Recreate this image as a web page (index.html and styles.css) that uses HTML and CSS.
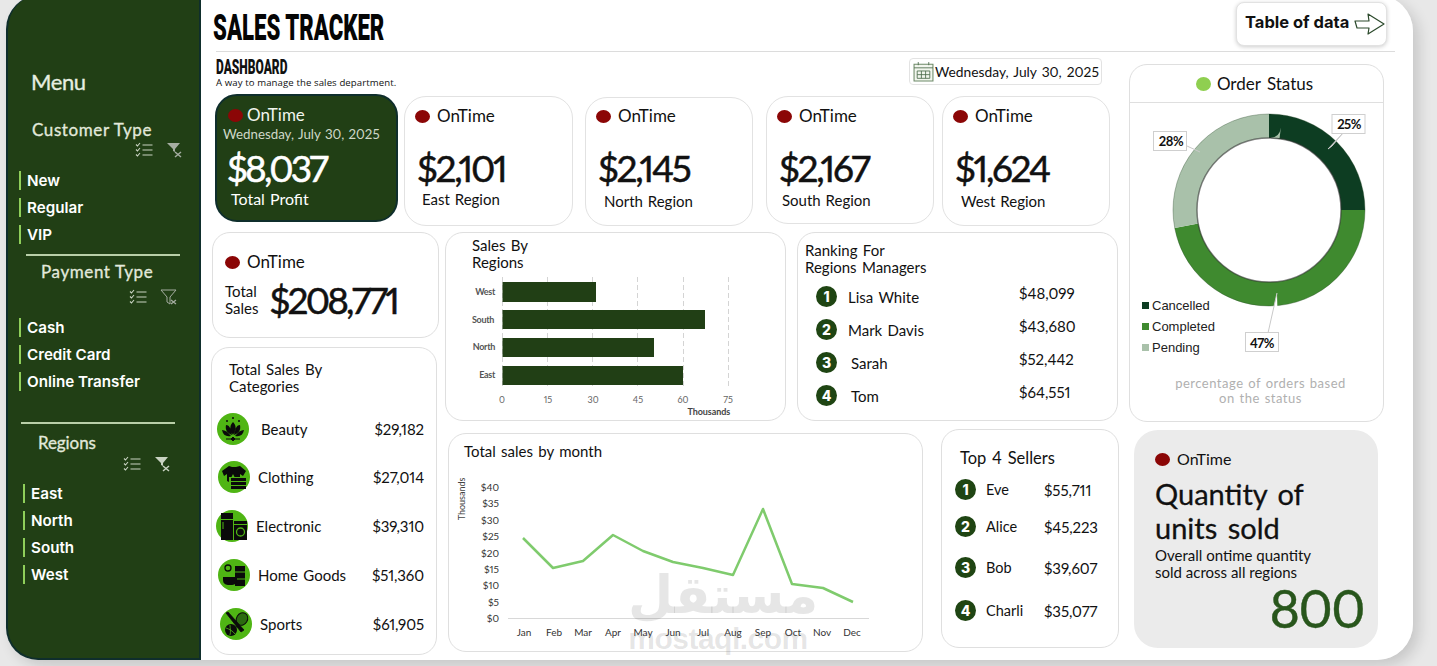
FILE: index.html
```html
<!DOCTYPE html>
<html lang="en">
<head>
<meta charset="utf-8">
<title>Sales Tracker</title>
<link rel="stylesheet" href="styles.css">
</head>
<body>
<svg class="defs" width="0" height="0" aria-hidden="true">
  <defs>
    <symbol id="checks" viewBox="0 0 18 16">
      <path d="M1 2.5l1.5 1.5L5 1M1 7.5L2.5 9 5 6M1 12.5L2.5 14 5 11M7.5 3h10M7.5 8h10M7.5 13h10" fill="none" stroke="currentColor" stroke-width="1.1"/>
    </symbol>
    <symbol id="funnel" viewBox="0 0 18 16">
      <path d="M1 1h13L9 7v3L7 9V7z" fill="currentColor"/>
      <path d="M9 10l6 5M15 10l-6 5" fill="none" stroke="currentColor" stroke-width="1.5"/>
    </symbol>
    <symbol id="funnel-open" viewBox="0 0 18 16">
      <path d="M1 1h15l-6 7v7l-3-2V8z" fill="none" stroke="currentColor" stroke-width="1"/>
      <path d="M11 11l5 4M16 11l-5 4" fill="none" stroke="currentColor" stroke-width="1.3"/>
    </symbol>
  </defs>
</svg>

<div class="shell">
  <aside class="sidebar">
    <h2 class="menu-title">Menu</h2>

    <section class="slicer slicer-customer">
      <h3 class="slicer-title">Customer Type</h3>
      <div class="slicer-tools">
        <svg class="tool"><use href="#checks"/></svg>
        <svg class="tool tool-dim"><use href="#funnel"/></svg>
      </div>
      <ul class="slicer-list">
        <li>New</li><li>Regular</li><li>VIP</li>
      </ul>
    </section>

    <section class="slicer slicer-payment">
      <h3 class="slicer-title">Payment Type</h3>
      <div class="slicer-tools">
        <svg class="tool"><use href="#checks"/></svg>
        <svg class="tool tool-dim"><use href="#funnel-open"/></svg>
      </div>
      <ul class="slicer-list">
        <li>Cash</li><li>Credit Card</li><li>Online Transfer</li>
      </ul>
    </section>

    <section class="slicer slicer-regions">
      <h3 class="slicer-title">Regions</h3>
      <div class="slicer-tools">
        <svg class="tool"><use href="#checks"/></svg>
        <svg class="tool"><use href="#funnel"/></svg>
      </div>
      <ul class="slicer-list">
        <li>East</li><li>North</li><li>South</li><li>West</li>
      </ul>
    </section>
  </aside>

  <main class="main">
    <header class="topbar">
      <h1 class="brand">SALES TRACKER</h1>
      <button class="table-btn"><span class="table-text">Table of data</span>
        <svg class="table-arrow" viewBox="0 0 32 24"><path d="M1 9h14l-1-7 16 10-16 10 1-6H3z" fill="#fff" stroke="#2c4a2c" stroke-width="1.2" stroke-linejoin="round"/></svg>
      </button>
    </header>

    <div class="content">
      <div class="left">
        <div class="subhead">
          <div>
            <div class="dash-title">DASHBOARD</div>
            <div class="dash-sub">A way to manage the sales department.</div>
          </div>
          <div class="date-chip">
            <svg class="cal" viewBox="0 0 20 20"><path d="M1 3h18v16H1z" fill="#f2f6ee" stroke="#6d8a68"/><path d="M1 6.500h18M4 9.500h12v7H4zM4 13h12M8 9.500v7M12 9.500v7M5 1v3M15 1v3" fill="none" stroke="#4a6a4a" stroke-width=".8"/></svg>
            <span>Wednesday, July 30, 2025</span>
          </div>
        </div>

        <div class="kpis">
          <article class="kpi kpi-main">
            <div class="status"><i class="dot"></i>OnTime</div>
            <div class="kpi-date">Wednesday, July 30, 2025</div>
            <div class="kpi-value">$8,037</div>
            <div class="kpi-label">Total Profit</div>
          </article>
          <article class="kpi kpi-east">
            <div class="status"><i class="dot"></i>OnTime</div>
            <div class="kpi-value">$2,101</div>
            <div class="kpi-label">East Region</div>
          </article>
          <article class="kpi kpi-north">
            <div class="status"><i class="dot"></i>OnTime</div>
            <div class="kpi-value">$2,145</div>
            <div class="kpi-label">North Region</div>
          </article>
          <article class="kpi kpi-south">
            <div class="status"><i class="dot"></i>OnTime</div>
            <div class="kpi-value">$2,167</div>
            <div class="kpi-label">South Region</div>
          </article>
          <article class="kpi kpi-west">
            <div class="status"><i class="dot"></i>OnTime</div>
            <div class="kpi-value">$1,624</div>
            <div class="kpi-label">West Region</div>
          </article>
        </div>

        <div class="lower">
          <div class="col-a">
            <article class="card total-card">
              <div class="status"><i class="dot"></i>OnTime</div>
              <div class="total-row">
                <div class="total-label">Total<br>Sales</div>
                <div class="total-value">$208,771</div>
              </div>
            </article>
            <article class="card cat-card">
              <h4 class="card-title">Total Sales By<br>Categories</h4>
              <ul class="cat-list">
                <li class="cat-row cat-beauty">
                  <svg class="cat-icon" viewBox="0 0 32 32"><circle cx="16" cy="16" r="16" fill="#4fb514"/><path d="M16 9c3 3 4 7 0 13-4-6-3-10 0-13zM9 12c3 0 5 3 6 10-5-2-7-5-6-10zM23 12c-3 0-5 3-6 10 5-2 7-5 6-10zM5 17c3 0 6 2 9 6-5 1-8-1-9-6zM27 17c-3 0-6 2-9 6 5 1 8-1 9-6z" fill="#0a0a0a"/><path d="M9 26h14M16 24l2 2-2 2-2-2z" stroke="#0a0a0a" fill="#0a0a0a"/><circle cx="16" cy="5" r="1" fill="#0a0a0a"/><circle cx="10" cy="8" r="1" fill="#0a0a0a"/><circle cx="22" cy="8" r="1" fill="#0a0a0a"/></svg>
                  <span class="cat-name">Beauty</span><span class="cat-amt">$29,182</span>
                </li>
                <li class="cat-row cat-clothing">
                  <svg class="cat-icon" viewBox="0 0 32 32"><circle cx="16" cy="16" r="16" fill="#4fb514"/><path d="M11 5l3 1h4l4-1 6 5-3 5-3-2v3H11v5l-2-1v-7l-3 2-2-5z" fill="#0a0a0a"/><path d="M13 17l2-4 2 4z" fill="#4fb514"/><path d="M13 17h15v3H13zM13 21h15v3H13zM13 25h15v3H13z" fill="#0a0a0a"/></svg>
                  <span class="cat-name">Clothing</span><span class="cat-amt">$27,014</span>
                </li>
                <li class="cat-row cat-electronic">
                  <svg class="cat-icon" viewBox="0 0 32 32"><circle cx="16" cy="16" r="16" fill="#4fb514"/><path d="M5 3h12v27H5zM18 11h13v19H18z" fill="#0a0a0a"/><path d="M5 9.500h12M7 12v7M18 14.500h13" stroke="#4fb514"/><circle cx="24.500" cy="22" r="4" fill="none" stroke="#4fb514" stroke-width="1.300"/></svg>
                  <span class="cat-name">Electronic</span><span class="cat-amt">$39,310</span>
                </li>
                <li class="cat-row cat-home">
                  <svg class="cat-icon" viewBox="0 0 32 32"><circle cx="16" cy="16" r="16" fill="#4fb514"/><path d="M17 7h10v20H17z" fill="#0a0a0a"/><path d="M17 13h10M17 20h10" stroke="#4fb514"/><path d="M5 18h14v3c0 4-3 5-6 5h-2c-3 0-6-1-6-5z" fill="#0a0a0a"/><circle cx="10" cy="9" r="3" fill="none" stroke="#0a0a0a" stroke-width="1.300"/></svg>
                  <span class="cat-name">Home Goods</span><span class="cat-amt">$51,360</span>
                </li>
                <li class="cat-row cat-sports">
                  <svg class="cat-icon" viewBox="0 0 32 32"><circle cx="16" cy="16" r="16" fill="#4fb514"/><ellipse cx="22" cy="11" rx="5.500" ry="6.500" transform="rotate(30 22 11)" fill="#2b6a10" stroke="#0a0a0a"/><path d="M18 17l-6 7M6 5l15 19 3-2L8 4z" fill="#0a0a0a" stroke="#0a0a0a" stroke-width=".8"/><circle cx="11" cy="22" r="6" fill="#0a0a0a"/><path d="M6 20c3 1 7 3 9 6M10 17c0 3 1 7 0 10" stroke="#4fb514" fill="none" stroke-width=".8"/></svg>
                  <span class="cat-name">Sports</span><span class="cat-amt">$61,905</span>
                </li>
              </ul>
            </article>
          </div>

          <div class="col-b">
            <div class="row-b1">
              <article class="card region-card">
                <h4 class="card-title">Sales By<br>Regions</h4>
                <svg class="bar-chart" viewBox="446 272 339 148">
                  <g class="grid-lines">
                    <path d="M502.500 277V387M547.500 277V387M592.500 277V387M637.500 277V387M683.500 277V387M728.500 277V387"/>
                  </g>
                  <g fill="#213f15">
                    <rect x="502.500" y="282" width="93.500" height="20"/>
                    <rect x="502.500" y="310" width="202.500" height="19"/>
                    <rect x="502.500" y="338" width="151.500" height="19"/>
                    <rect x="502.500" y="366" width="180.500" height="19"/>
                  </g>
                  <g class="bar-cat">
                    <text x="495" y="295">West</text>
                    <text x="494" y="323">South</text>
                    <text x="495" y="350">North</text>
                    <text x="495" y="378">East</text>
                  </g>
                  <g class="bar-tick">
                    <text x="502" y="403">0</text>
                    <text x="548" y="403">15</text>
                    <text x="593" y="403">30</text>
                    <text x="638" y="403">45</text>
                    <text x="683" y="403">60</text>
                    <text x="728" y="403">75</text>
                  </g>
                  <text class="bar-unit" x="730" y="415">Thousands</text>
                </svg>
              </article>
              <article class="card mgr-card">
                <h4 class="card-title">Ranking For<br>Regions Managers</h4>
                <ul class="rank-list">
                  <li class="rank-row"><i class="badge">1</i><span class="rank-name">Lisa White</span><span class="rank-amt">$48,099</span></li>
                  <li class="rank-row"><i class="badge">2</i><span class="rank-name">Mark Davis</span><span class="rank-amt">$43,680</span></li>
                  <li class="rank-row"><i class="badge">3</i><span class="rank-name shift">Sarah</span><span class="rank-amt">$52,442</span></li>
                  <li class="rank-row"><i class="badge">4</i><span class="rank-name shift">Tom</span><span class="rank-amt">$64,551</span></li>
                </ul>
              </article>
            </div>
            <div class="row-b2">
              <article class="card month-card">
                <h4 class="card-title">Total sales by month</h4>
                <svg class="line-chart" viewBox="449 470 473 181">
                  <path class="line-base" d="M508 618.500H869"/>
                  <polyline class="line-series" points="523,538 553,568 583,561 613,535 643,551 673,562 703,568 733,575 763,509 792,584 823,588 853,602"/>
                  <g class="line-y">
                    <text x="499" y="491">$40</text>
                    <text x="499" y="507">$35</text>
                    <text x="499" y="524">$30</text>
                    <text x="499" y="540">$25</text>
                    <text x="499" y="557">$20</text>
                    <text x="499" y="573">$15</text>
                    <text x="499" y="589">$10</text>
                    <text x="499" y="606">$5</text>
                    <text x="499" y="622">$0</text>
                  </g>
                  <g class="line-x">
                    <text x="524" y="636">Jan</text><text x="554" y="636">Feb</text><text x="583" y="636">Mar</text><text x="613" y="636">Apr</text><text x="643" y="636">May</text><text x="673" y="636">Jun</text><text x="703" y="636">Jul</text><text x="733" y="636">Aug</text><text x="763" y="636">Sep</text><text x="793" y="636">Oct</text><text x="822" y="636">Nov</text><text x="852" y="636">Dec</text>
                  </g>
                  <text class="line-unit" transform="translate(465 499) rotate(-90)">Thousands</text>
                </svg>
              </article>
              <article class="card seller-card">
                <h4 class="card-title">Top 4 Sellers</h4>
                <ul class="seller-list">
                  <li class="seller-row"><i class="badge">1</i><span class="seller-name">Eve</span><span class="seller-amt">$55,711</span></li>
                  <li class="seller-row"><i class="badge">2</i><span class="seller-name">Alice</span><span class="seller-amt">$45,223</span></li>
                  <li class="seller-row seller-wide"><i class="badge">3</i><span class="seller-name">Bob</span><span class="seller-amt">$39,607</span></li>
                  <li class="seller-row seller-wide"><i class="badge">4</i><span class="seller-name">Charli</span><span class="seller-amt">$35,077</span></li>
                </ul>
              </article>
            </div>
          </div>
        </div>
      </div>

      <div class="right">
        <article class="card order-card">
          <div class="order-head"><i class="dot dot-green"></i>Order Status</div>
          <svg class="donut" viewBox="1130 103 253 265">
            <g fill="none" stroke-width="24">
              <circle cx="1269" cy="210" r="84" stroke="#0d3d22" pathLength="100" stroke-dasharray="25 75" transform="rotate(-90 1269 210)"/>
              <circle cx="1269" cy="210" r="84" stroke="#3f8a2f" pathLength="100" stroke-dasharray="47 53" stroke-dashoffset="-25" transform="rotate(-90 1269 210)"/>
              <circle cx="1269" cy="210" r="84" stroke="#a9c1aa" pathLength="100" stroke-dasharray="28 72" stroke-dashoffset="-72" transform="rotate(-90 1269 210)"/>
            </g>
            <circle cx="1269" cy="210" r="72" fill="none" stroke="#333" stroke-width="1.500" opacity=".6"/>
            <circle cx="1269" cy="210" r="96" fill="none" stroke="#2a4a2a" stroke-width="1" opacity=".35"/>
            <path class="leader" d="M1343 133l-15 16 4-3zM1187 146l13 6M1277 293l-9 40 10 0"/>
            <g class="pct-box">
              <rect x="1332" y="114.500" width="33" height="19"/>
              <rect x="1153.500" y="131.500" width="33" height="19"/>
              <rect x="1245.500" y="332.500" width="33" height="19"/>
            </g>
            <g class="pct-text">
              <text x="1349" y="129">25%</text>
              <text x="1171" y="146">28%</text>
              <text x="1262" y="348">47%</text>
            </g>
            <g class="legend">
              <rect x="1142" y="302" width="7" height="7" fill="#0d3d22"/><text x="1152" y="310">Cancelled</text>
              <rect x="1142" y="323" width="7" height="7" fill="#3f8a2f"/><text x="1152" y="331">Completed</text>
              <rect x="1142" y="344" width="7" height="7" fill="#a9c1aa"/><text x="1152" y="352">Pending</text>
            </g>
          </svg>
          <p class="order-note">percentage of orders based<br>on the status</p>
        </article>
        <article class="qty-card">
          <div class="status"><i class="dot"></i>OnTime</div>
          <h3 class="qty-title">Quantity of<br>units sold</h3>
          <p class="qty-sub">Overall ontime quantity<br>sold across all regions</p>
          <div class="qty-value">800</div>
        </article>
      </div>
    </div>
  </main>
</div>

<div class="watermark" aria-hidden="true">
  <div class="wm-ar">مستقل</div>
  <div class="wm-en">mostaql.com</div>
</div>
</body>
</html>
```

FILE: styles.css
```css
* { box-sizing: border-box; }
html, body { margin: 0; padding: 0; }
body {
  width: 1437px;
  height: 666px;
  overflow: hidden;
  position: relative;
  background: #e8e8e8;
  font-family: "Lato", "Open Sans", sans-serif;
  font-variant-numeric: proportional-nums lining-nums;
  color: #111;
}
ul { list-style: none; margin: 0; padding: 0; }
h1, h2, h3, h4, p { margin: 0; font-weight: 400; }
i { font-style: normal; }
.defs { position: absolute; }

.shell {
  display: flex;
  width: 1407px;
  height: 665px;
  margin: -5px 0 0 6px;
  border-radius: 36px 36px 36px 32px;
  box-shadow: 6px 6px 14px rgba(0,0,0,.14);
}

/* sidebar */
.sidebar {
  width: 195px;
  flex: none;
  background: #213f15;
  border-left: 2px solid #0f2e2c;
  border-bottom: 2px solid #0f2e2c;
  border-right: 2px solid #0f2e2c;
  border-radius: 34px 0 0 32px;
  color: #fff;
}
.menu-title {
  font-size: 22px;
  line-height: 26px;
  margin: 74px 0 0 23px;
  color: #e6eee0;
  letter-spacing: -.4px;
  -webkit-text-stroke: .3px #e6eee0;
}
.slicer-title {
  font-size: 17px;
  line-height: 20px;
  color: #e2e9dc;
  letter-spacing: .6px;
  -webkit-text-stroke: .3px #e2e9dc;
  white-space: nowrap;
}
.slicer-customer { margin: 25px 0 0 24px; width: 150px; }
.slicer-payment {
  margin: 10px 0 0 18px;
  width: 154px;
  padding-top: 6px;
  border-top: 2px solid #b9cfa8;
}
.slicer-payment .slicer-title { margin-left: 15px; }
.slicer-regions {
  margin: 31px 0 0 13px;
  width: 154px;
  padding-top: 9px;
  border-top: 2px solid #b9cfa8;
}
.slicer-regions .slicer-title { margin-left: 17px; letter-spacing: -.1px; }
.slicer-tools {
  display: flex;
  justify-content: flex-end;
  gap: 13px;
  height: 16px;
  margin-top: 3px;
  color: #c9d3c2;
}
.tool { width: 18px; height: 16px; }
.tool-dim { color: #a5ada1; }
.slicer-customer .slicer-tools { margin-right: -2px; margin-top: 2px; }
.slicer-payment .slicer-tools { margin-right: 2px; margin-top: 7px; }
.slicer-regions .slicer-tools { margin-right: 3px; margin-top: 3px; }
.slicer-list { margin: 13px 0 0 -13px; }
.slicer-payment .slicer-list { margin: 13px 0 0 -7px; }
.slicer-regions .slicer-list { margin: 12px 0 0 2px; }
.slicer-list li {
  height: 19px;
  line-height: 19px;
  margin-bottom: 8px;
  padding-left: 6px;
  border-left: 2px solid #8fcf5a;
  font-family: "Inter", sans-serif;
  font-weight: 600;
  font-size: 15.200px;
}

/* main */
.main {
  flex: 1;
  min-width: 0;
  background: #fff;
  border-radius: 0 36px 36px 0;
}
.topbar {
  display: flex;
  justify-content: space-between;
  align-items: flex-start;
  width: 1179px;
  height: 57px;
  margin-left: 15px;
  border-bottom: 1px solid #dcdcdc;
  padding-top: 7px;
}
.brand {
  font-family: "Roboto", sans-serif;
  font-weight: 900;
  font-size: 37px;
  line-height: 44px;
  margin: 4px 0 0 -3px;
  transform: scaleX(.6);
  transform-origin: left center;
  white-space: nowrap;
  color: #050505;
}
.table-btn {
  display: flex;
  align-items: center;
  gap: 5px;
  width: 151px;
  height: 44px;
  margin-right: 8px;
  padding: 0 0 0 8px;
  background: #fff;
  border: 1px solid #e2e2e2;
  border-radius: 8px;
  box-shadow: 0 1px 4px rgba(0,0,0,.2);
  font-family: "Inter", sans-serif;
  font-weight: 700;
  font-size: 16.500px;
  color: #111;
  white-space: nowrap;
}
.table-text { padding-bottom: 5px; }
.table-arrow { width: 32px; height: 24px; flex: none; }

.content { display: flex; padding-left: 10px; }
.left { width: 908px; flex: none; }
.right { width: 256px; margin-left: 10px; flex: none; }

.subhead {
  display: flex;
  justify-content: space-between;
  align-items: flex-start;
  height: 42px;
  padding: 6px 17px 0 5px;
}
.dash-title {
  font-family: "Roboto", sans-serif;
  font-weight: 900;
  font-size: 20px;
  line-height: 19px;
  transform: scaleX(.6);
  transform-origin: left center;
  white-space: nowrap;
}
.dash-sub { font-family: "Open Sans", sans-serif; font-size: 9.600px; line-height: 12px; letter-spacing: .1px; }
.date-chip {
  display: flex;
  align-items: center;
  gap: 1px;
  width: 193px;
  height: 27px;
  padding-left: 3px;
  border: 1px solid #e3e3e3;
  border-radius: 4px;
  font-size: 13.800px;
  white-space: nowrap;
  word-spacing: 1.500px;
}
.cal { width: 21px; height: 21px; flex: none; }

/* KPI row */
.kpis { display: flex; align-items: flex-start; height: 138px; }
.kpi {
  position: relative;
  background: #fff;
  border: 1px solid #e2e2e2;
  border-radius: 22px;
  width: 168px;
  flex: none;
}
.status {
  display: flex;
  align-items: center;
  font-size: 17px;
  line-height: 20px;
}
.dot {
  display: inline-block;
  width: 15px;
  height: 13px;
  border-radius: 50%;
  background: #8b0606;
  margin-right: 7px;
  flex: none;
}
.kpi .status { padding: 9px 0 0 10px; }
.kpi-main {
  width: 183px;
  height: 128px;
  margin: 0 0 0 4px;
  background: #213f15;
  border: 2px solid #0f2e2c;
  color: #fff;
}
.kpi-main .status { padding: 9px 0 0 11px; color: #f1f5ee; }
.kpi-main .dot { margin-right: 4px; }
.kpi-date {
  font-size: 13.300px;
  line-height: 16px;
  margin: 1px 0 0 6px;
  color: #cfd8c8;
  white-space: nowrap;
  word-spacing: 1px;
}
.kpi-value {
  font-size: 37px;
  line-height: 42px;
  letter-spacing: -2.300px;
  margin-left: 12px;
  margin-top: 12px;
}
.kpi-main .kpi-value { margin: 5px 0 0 10px; -webkit-text-stroke: .5px #fff; letter-spacing: -2.800px; }
.kpi-label { font-size: 15px; line-height: 20px; margin: 0 0 0 17px; word-spacing: 1px; }
.kpi-main .kpi-label { margin: 0 0 0 14px; font-size: 16px; }
.kpi-east  { width: 169px; height: 130px; margin: 2px 0 0 6px; }
.kpi-north { height: 129px; margin: 3px 0 0 12px; }
.kpi-south { height: 128px; margin: 2px 0 0 13px; }
.kpi-west  { height: 130px; margin: 2px 0 0 8px; }
.kpi-east .kpi-value, .kpi-north .kpi-value, .kpi-south .kpi-value, .kpi-west .kpi-value {
  -webkit-text-stroke: .5px #111; margin-top: 21px;
}
.kpi-north .kpi-label { margin-left: 18px; margin-top: 2px; }
.kpi-south .kpi-label { margin-left: 15px; margin-top: 1px; }
.kpi-west .kpi-label { margin-left: 18px; margin-top: 2px; }
.kpi-north .status { padding-top: 8px; }

/* lower */
.lower { display: flex; align-items: flex-start; }
.card {
  background: #fff;
  border: 1px solid #dfdfdf;
  border-radius: 18px;
  flex: none;
}
.card-title { font-size: 15px; line-height: 17px; word-spacing: 1.500px; }
.col-a { width: 234px; flex: none; }
.total-card { width: 227px; height: 106px; margin-left: 1px; padding: 19px 0 0 12px; }
.total-row { display: flex; align-items: center; margin-top: 7px; }
.total-label { font-size: 15px; line-height: 17px; margin-right: 11px; }
.total-value { font-size: 37px; line-height: 42px; letter-spacing: -2.800px; -webkit-text-stroke: .5px #111; white-space: nowrap; }
.cat-card { width: 226px; height: 308px; margin-top: 9px; padding: 13px 12px 0 5px; }
.cat-card .card-title { margin-left: 12px; }
.cat-list { margin-top: 8px; }
.cat-row { display: flex; align-items: center; height: 49px; font-size: 15px; }
.cat-icon { width: 32px; height: 32px; flex: none; }
.cat-name { flex: 1; margin-left: 8px; word-spacing: 1.500px; }
.cat-amt { font-size: 15px; letter-spacing: -.1px; }
.cat-beauty { position: relative; top: 1px; }
.cat-beauty .cat-name { margin-left: 12px; }
.cat-clothing .cat-icon, .cat-home .cat-icon { margin-left: 1px; }
.cat-sports .cat-icon { margin-left: 3px; }
.cat-electronic .cat-icon { margin-left: -1px; }

.col-b { width: 674px; flex: none; }
.row-b1 { display: flex; align-items: flex-start; height: 197px; }
.region-card { width: 341px; height: 189px; padding-top: 4px; }
.region-card .card-title { margin: 0 0 1px 26px; }
.bar-chart { display: block; width: 339px; height: 148px; }
.grid-lines path { stroke: #d4d4d4; fill: none; stroke-dasharray: 5 3; }
.bar-cat text { font-size: 9px; font-weight: 700; fill: #555; text-anchor: end; letter-spacing: -.3px; }
.bar-tick text { font-size: 9px; fill: #666; text-anchor: middle; }
.bar-unit { font-size: 9px; font-weight: 700; fill: #444; text-anchor: end; letter-spacing: -.1px; }
.mgr-card { width: 321px; height: 189px; margin-left: 11px; padding: 9px 0 0 7px; }
.rank-list { margin-top: 4px; }
.rank-row { display: flex; align-items: center; height: 33px; font-size: 15px; padding-left: 11px; word-spacing: 1.500px; }
.badge {
  display: flex;
  align-items: center;
  justify-content: center;
  width: 21px;
  height: 21px;
  flex: none;
  border-radius: 50%;
  background: #1f4513;
  color: #fff;
  font-family: "Inter", sans-serif;
  font-weight: 800;
  font-size: 14px;
}
.rank-name { width: 171px; margin-left: 11px; }
.rank-name.shift { margin-left: 14px; width: 168px; }
.rank-amt { position: relative; top: -4px; }

.row-b2 { display: flex; align-items: flex-start; }
.month-card { width: 475px; height: 219px; margin: 4px 0 0 3px; padding: 8px 0 0 15px; position: relative; }
.month-card .card-title { height: 28px; line-height: 18px; }
.line-chart { display: block; width: 473px; height: 181px; margin-left: -15px; }
.line-base { stroke: #d8d8d8; fill: none; }
.line-series { fill: none; stroke: #7fcb6d; stroke-width: 2.500; stroke-linejoin: round; }
.line-y text { font-size: 10px; fill: #333; text-anchor: end; }
.line-x text { font-size: 10px; fill: #333; text-anchor: middle; }
.line-unit { font-size: 9px; fill: #444; text-anchor: middle; }
.seller-card { width: 178px; height: 219px; margin-left: 18px; padding: 18px 0 0 13px; }
.seller-card .card-title { margin-left: 5px; font-size: 16.500px; line-height: 20px; }
.seller-list { margin-top: 3px; }
.seller-row { display: flex; align-items: center; height: 37px; font-size: 14.500px; }
.seller-wide { height: 41px; margin-top: 2px; }
.seller-name { width: 58px; margin-left: 10px; }
.seller-amt { font-size: 15px; letter-spacing: -.1px; }

/* right */
.order-card { width: 255px; height: 358px; margin-top: 12px; }
.order-head {
  display: flex;
  align-items: center;
  justify-content: center;
  height: 38px;
  border-bottom: 1px solid #dfdfdf;
  font-size: 17px;
  word-spacing: 2px;
  padding-right: 4px;
}
.dot-green { width: 15px; height: 14px; background: #8fcf50; margin-right: 6px; }
.donut { display: block; width: 253px; height: 265px; }
.leader { fill: #fff; stroke: #c9c9c9; stroke-width: 1; }
.pct-box rect { fill: #fff; stroke: #cfcfcf; }
.pct-text text { font-size: 13px; font-weight: 700; text-anchor: middle; letter-spacing: -.5px; fill: #111; }
.legend text { font-family: "Liberation Sans Narrow", "Liberation Sans", sans-serif; font-size: 13px; fill: #222; }
.order-note { text-align: center; font-size: 13px; line-height: 15px; color: #b0b0b0; padding-left: 8px; margin-top: 8px; word-spacing: 1px; letter-spacing: .5px; }
.qty-card {
  width: 244px;
  height: 218px;
  margin: 8px 0 0 5px;
  background: #ebebeb;
  border-radius: 24px;
  padding: 19px 14px 0 21px;
}
.qty-card .status { font-size: 16px; }
.qty-title { font-size: 29px; line-height: 34px; margin-top: 8px; word-spacing: 3px; -webkit-text-stroke: .3px #111; }
.qty-sub { font-size: 15px; line-height: 17px; margin-top: 2px; white-space: nowrap; }
.qty-value { font-size: 52px; line-height: 50px; text-align: right; color: #28561c; margin-top: 2px; letter-spacing: -1.500px; -webkit-text-stroke: .4px #28561c; }

/* watermark */
.watermark {
  position: absolute;
  left: 628px;
  top: 565px;
  width: 180px;
  text-align: center;
  color: rgba(60,60,60,.13);
  pointer-events: none;
}
.wm-ar { font-family: "DejaVu Sans", sans-serif; font-weight: 700; font-size: 52px; line-height: 60px; }
.wm-en { font-family: "Liberation Sans", sans-serif; font-weight: 700; font-size: 30px; line-height: 28px; letter-spacing: -.5px; }
```
